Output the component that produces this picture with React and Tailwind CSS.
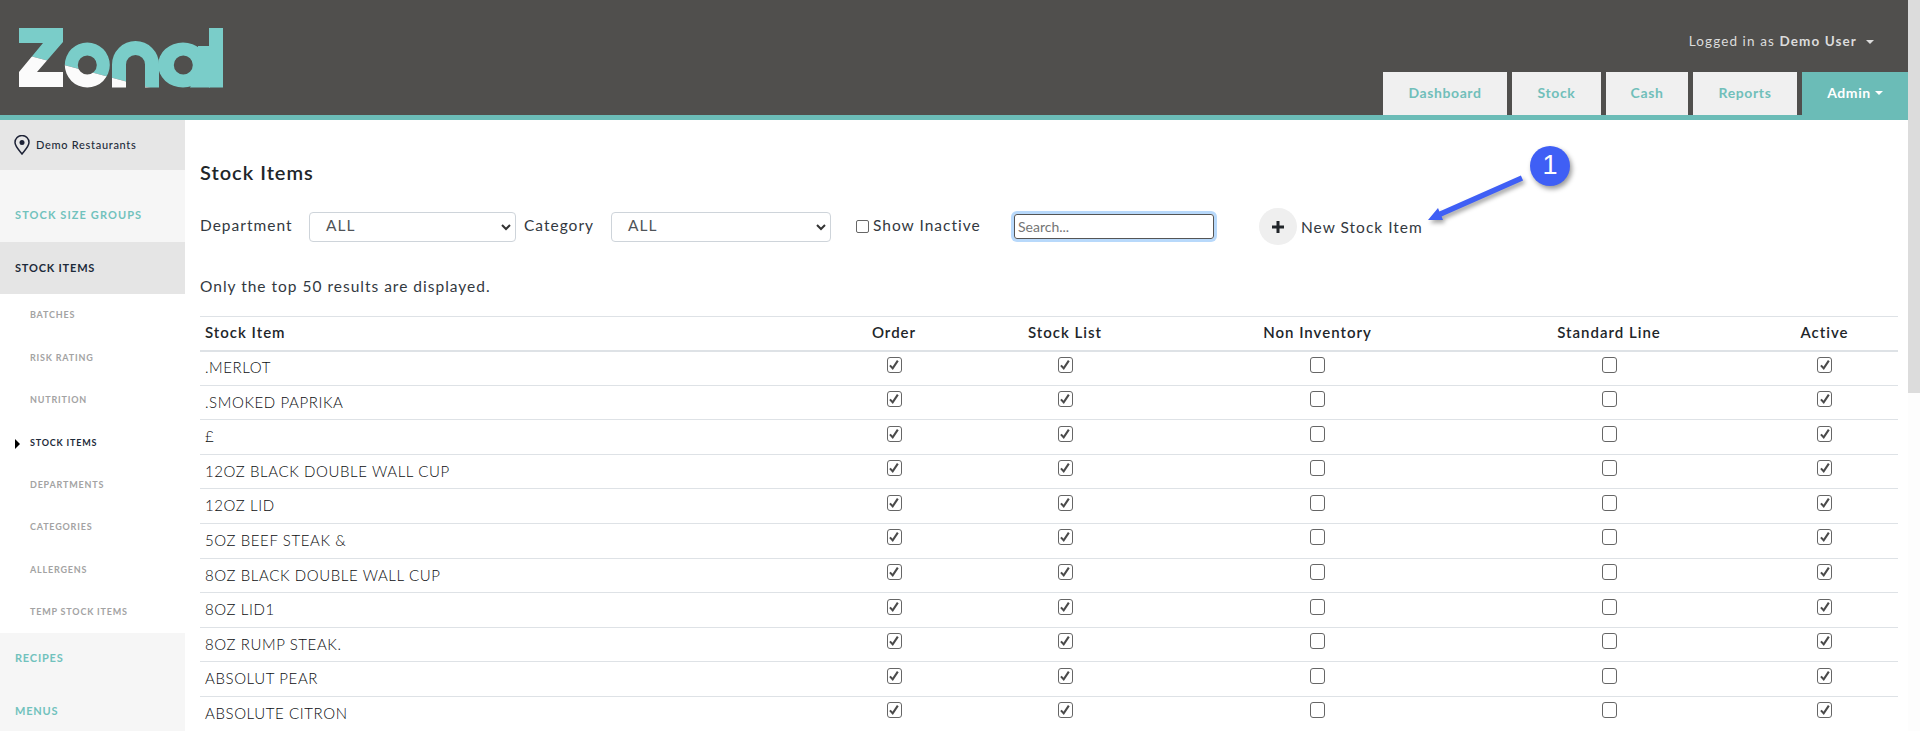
const subItems = [
  ["BATCHES", false], ["RISK RATING", false], ["NUTRITION", false], ["STOCK ITEMS", true],
  ["DEPARTMENTS", false], ["CATEGORIES", false], ["ALLERGENS", false], ["TEMP STOCK ITEMS", false],
];
const rows = [".MERLOT", ".SMOKED PAPRIKA", "£", "12OZ BLACK DOUBLE WALL CUP", "12OZ LID", "5OZ BEEF STEAK &", "8OZ BLACK DOUBLE WALL CUP", "8OZ LID1", "8OZ RUMP STEAK.", "ABSOLUT PEAR", "ABSOLUTE CITRON"];

function Logo() {
  const shapes = (
    <>
      <polygon points="19,28 63,28 63,42 37,72 63,72 63,87 19,87 19,72 43,43 19,43" />
      <path fillRule="evenodd" d="M64.8 65a22.5 22.5 0 1 0 45 0a22.5 22.5 0 1 0 -45 0ZM77.8 65a9.5 9.5 0 1 1 19 0a9.5 9.5 0 1 1 -19 0Z" />
      <path d="M112 87.5V64.5A23.5 23.5 0 0 1 159 64.5V87.5H145V64.5A9.5 9.5 0 0 0 126 64.5V87.5Z" />
      <path fillRule="evenodd" d="M158 65a25 22.5 0 1 0 50 0a25 22.5 0 1 0 -50 0ZM173.8 65a9.5 9.5 0 1 1 19 0a9.5 9.5 0 1 1 -19 0Z" />
      <path d="M198 46H210V87.5H190L194 80Z" />
      <rect x="209" y="28" width="14" height="59.5" />
    </>
  );
  return (
    <svg width="240" height="115" viewBox="0 0 240 115" className="block shrink-0">
      <defs>
        <clipPath id="logoTop"><polygon points="0,48 240,111.65 240,0 0,0" /></clipPath>
        <clipPath id="logoBottom"><polygon points="0,48 240,111.65 240,115 0,115" /></clipPath>
      </defs>
      <g fill="#7acdc9" clipPath="url(#logoTop)">{shapes}</g>
      <g fill="#fbfbfb" clipPath="url(#logoBottom)">{shapes}</g>
    </svg>
  );
}

function Caret({ className }) {
  return <span className={"inline-block w-0 h-0 border-x-[4px] border-x-transparent border-t-[4px] " + className} />;
}

function Tab({ children, w }) {
  return (
    <div className={"h-[43px] bg-[#f0f0f0] flex items-center justify-center pb-[2px] text-[14px] font-bold text-[#71bfba] tracking-[0.6px] " + w}>
      {children}
    </div>
  );
}

function Check({ on }) {
  return (
    <span className="inline-flex w-[15px] h-[16px] border border-[#666] rounded-[3px] bg-white items-center justify-center align-top mt-[5.5px]">
      {on && (
        <svg width="12" height="12" viewBox="0 0 11 11" fill="none" stroke="#4a4a4a" strokeWidth="1.9">
          <path d="M1.8 5.8L4.3 8.6L9 1.5" />
        </svg>
      )}
    </span>
  );
}

function Select({ w }) {
  return (
    <div className={"h-[30px] border border-[#ced4da] rounded-[4px] bg-white flex items-center justify-between pl-[16px] pr-[4px] pb-[2px] text-[15.5px] text-[#4f5458] " + w}>
      <span>ALL</span>
      <svg width="10" height="8" viewBox="0 0 10 8" fill="none" stroke="#333" strokeWidth="2" className="mt-[2px]"><path d="M1 2l4 4 4-4" /></svg>
    </div>
  );
}

export default function App() {
  return (
    <div className="h-[731px] w-[1920px] overflow-hidden flex bg-white tracking-[1px] text-[#33393f]" style={{ fontFamily: '"Lato", "Open Sans", sans-serif' }}>
      <div className="w-[1908px] shrink-0 flex flex-col">
        <header className="h-[120px] shrink-0 bg-[#504f4d] border-b-[5px] border-[#6bbcb7] flex justify-between">
          <Logo />
          <div className="flex flex-col items-end">
            <div className="h-[72px] flex items-center gap-[9px] pr-[34px] pt-[11px] text-[13.5px] text-[#dcdcdc] tracking-[1.1px]">
              <span>Logged in as <b className="font-bold">Demo User</b></span>
              <Caret className="border-t-[#dcdcdc]" />
            </div>
            <nav className="flex gap-[5px]">
              <Tab w="w-[124px]">Dashboard</Tab>
              <Tab w="w-[89px]">Stock</Tab>
              <Tab w="w-[82px]">Cash</Tab>
              <Tab w="w-[104px]">Reports</Tab>
              <div className="w-[106px] h-[43px] bg-[#6bbcb7] flex items-center justify-center gap-[4px] pb-[2px] text-[14px] font-bold text-white tracking-[0.6px]">
                Admin <Caret className="border-t-white" />
              </div>
            </nav>
          </div>
        </header>
        <div className="flex flex-1 min-h-0">
          <aside className="w-[185px] shrink-0 bg-[#f6f6f6] flex flex-col overflow-hidden">
            <div className="h-[50px] shrink-0 bg-[#e6e6e6] flex items-center pl-[14px] pt-[1px] gap-[6px] text-[11px] text-[#1d2b3a] font-medium tracking-[0.7px]">
              <svg width="16" height="20" viewBox="0 0 16 20" fill="none" stroke="#1d2236" strokeWidth="1.5" className="shrink-0 -mt-[2px]">
                <path d="M8 19C4 14 1 11 1 7.5a7 7 0 0 1 14 0C15 11 12 14 8 19Z" />
                <circle cx="8" cy="7.5" r="2.5" fill="#1d2236" stroke="none" />
              </svg>
              Demo Restaurants
            </div>
            <div className="h-[72px] shrink-0 flex items-center pl-[15px] pt-[19px] text-[11px] font-bold text-[#71c2bd] tracking-[1.1px]">STOCK SIZE GROUPS</div>
            <div className="h-[52px] shrink-0 bg-[#e5e5e5] flex items-center pl-[15px] text-[11px] font-bold text-[#1d2b3a] tracking-[0.8px]">STOCK ITEMS</div>
            <div className="bg-white h-[339px] shrink-0 flex flex-col">
              {subItems.map(([t, active]) => (
                <div key={t} className={"h-[42.4px] shrink-0 flex items-center relative pl-[30px] text-[9px] font-bold tracking-[0.8px] " + (active ? "text-[#1d2b3a]" : "text-[#a3a3a3]")}>
                  {active && <span className="absolute left-[15px] top-[18px] w-0 h-0 border-y-[5px] border-y-transparent border-l-[5px] border-l-black" />}
                  {t}
                </div>
              ))}
            </div>
            <div className="h-[50px] shrink-0 flex items-center pl-[15px] text-[11px] font-bold text-[#71c2bd] tracking-[0.8px]">RECIPES</div>
            <div className="h-[56px] shrink-0 flex items-center pl-[15px] text-[11px] font-bold text-[#71c2bd] tracking-[0.8px]">MENUS</div>
          </aside>
          <main className="flex-1 min-w-0 pl-[15px] pr-[10px] relative">
            <h1 className="text-[20px] font-semibold text-[#212529] leading-[30px] mt-[37px] tracking-[1px]">Stock Items</h1>
            <div className="flex items-center h-[37px] mt-[21px] text-[15.5px]">
              <span className="w-[109px] -mt-[2px]">Department</span>
              <Select w="w-[207px]" />
              <span className="w-[95px] pl-[8px] -mt-[2px]">Category</span>
              <Select w="w-[220px]" />
              <span className="ml-[25px] w-[13px] h-[13px] border border-[#666] rounded-[2px] bg-white" />
              <span className="ml-[4px] w-[141px] -mt-[2px]">Show Inactive</span>
              <div className="w-[200px] h-[25px] border border-[#555] rounded-[3px] ring-[3px] ring-[#b8d9fb] flex items-center pl-[3px] text-[14px] text-[#757575] tracking-normal">Search...</div>
              <div className="ml-[45px] w-[38px] h-[37px] rounded-full bg-[#efefef] flex items-center justify-center">
                <svg width="14" height="14" viewBox="0 0 14 14" fill="#212529"><path d="M5.5 1h3v4.5H13v3H8.5V13h-3V8.5H1v-3h4.5Z" /></svg>
              </div>
              <span className="ml-[4px] mt-[2px]">New Stock Item</span>
            </div>
            <p className="text-[15.5px] leading-[24px] mt-[29px]">Only the top 50 results are displayed.</p>
            <table className="w-[1698px] table-fixed border-collapse mt-[18px] text-[15px]">
              <colgroup>
                <col className="w-[626px]" /><col className="w-[136px]" /><col className="w-[206px]" /><col className="w-[299px]" /><col className="w-[284px]" /><col className="w-[147px]" />
              </colgroup>
              <thead>
                <tr className="h-[34px] border-t border-b-2 border-t-[#dee2e6] border-b-[#dee2e6] font-semibold text-[#212529]">
                  <th className="text-left pl-[5px] pb-[2px] font-semibold">Stock Item</th>
                  <th className="font-semibold pb-[2px]">Order</th>
                  <th className="font-semibold pb-[2px]">Stock List</th>
                  <th className="font-semibold pb-[2px]">Non Inventory</th>
                  <th className="font-semibold pb-[2px]">Standard Line</th>
                  <th className="font-semibold pb-[2px]">Active</th>
                </tr>
              </thead>
              <tbody>
                {rows.map((r) => (
                  <tr key={r} className="h-[34.6px] border-b border-[#dee2e6]">
                    <td className="pl-[5px] pb-[1px] tracking-[0.6px] font-light text-[#0b0d0f]">{r}</td>
                    <td className="text-center align-top p-0"><Check on /></td>
                    <td className="text-center align-top p-0"><Check on /></td>
                    <td className="text-center align-top p-0"><Check /></td>
                    <td className="text-center align-top p-0"><Check /></td>
                    <td className="text-center align-top p-0"><Check on /></td>
                  </tr>
                ))}
              </tbody>
            </table>
            <div className="absolute left-[1345px] top-[26px] w-[40px] h-[40px] rounded-full bg-[#3f5ff5] shadow-[2px_3px_5px_rgba(0,0,0,0.4)] flex items-center justify-center pb-[2px] text-white text-[27px] tracking-normal" style={{ fontFamily: '"Liberation Sans", sans-serif' }}>1</div>
            <svg className="absolute left-[1235px] top-[50px]" width="110" height="60" viewBox="0 0 110 60" style={{ filter: "drop-shadow(2px 3px 2px rgba(0,0,0,0.35))" }}>
              <path d="M8 50L18 38L19.4 41.5L100.9 5.5L103.1 10.5L21.6 46.5L23 50Z" fill="#3f5ff5" />
            </svg>
          </main>
        </div>
      </div>
      <div className="w-[12px] shrink-0 bg-[#fdfdfd]">
        <div className="h-[393px] bg-[#dcdcdc]" />
      </div>
    </div>
  );
}
